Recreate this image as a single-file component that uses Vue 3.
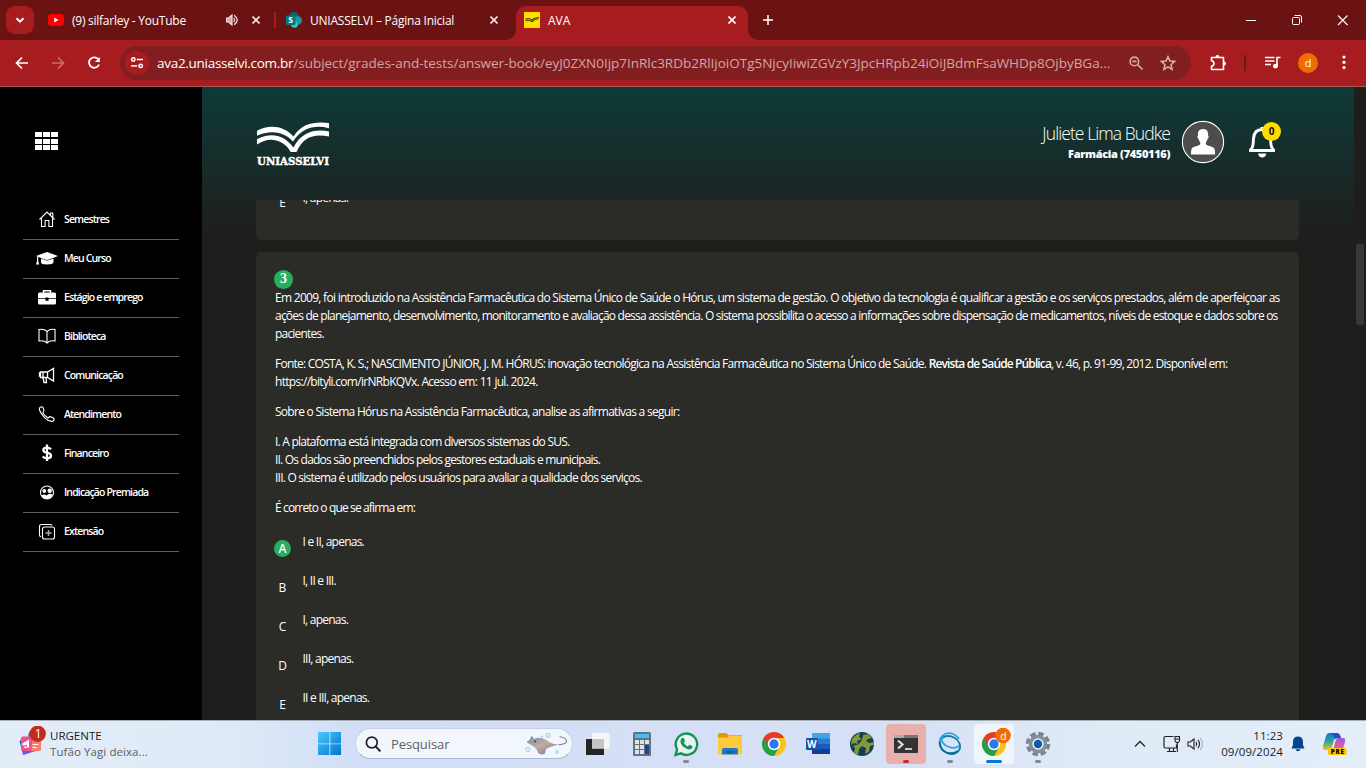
<template>
  <div class="screen">
    <!-- Browser tabs -->
    <header class="tabstrip">
      <button class="tab-search">
        <svg width="28" height="28" viewBox="0 0 28 28"><path d="M10.5 12.3l3.5 3.4 3.5-3.4" fill="none" stroke="#fff" stroke-width="2" /></svg>
      </button>
      <div class="tab tab-youtube">
        <svg class="favicon" width="16" height="16" viewBox="0 0 16 16">
          <rect y="2" width="16" height="12" rx="3" fill="#f00" />
          <path d="M6.2 5.5v5L10.6 8z" fill="#fff" />
        </svg>
        <span class="tab-title">(9) silfarley - YouTube</span>
        <svg class="sound" width="12" height="12" viewBox="0 0 12 12">
          <path d="M.5 4h2L6 1v10L2.5 8h-2z" fill="#d9a9aa" stroke="#f5dede" stroke-width="1.2" />
          <path d="M7.8 3.8q1.500 2.200 0 4.400M8.200 1.200q6 4.800 0 9.600" fill="none" stroke="#f5dede" stroke-width="1.3" />
        </svg>
        <svg class="close" width="8" height="8" viewBox="0 0 8 8"><path d="M.5.5l7 7M7.500.5l-7 7" stroke="#f6e4e4" stroke-width="1.6" /></svg>
      </div>
      <span class="tab-divider"></span>
      <div class="tab tab-portal">
        <svg class="favicon" width="16" height="16" viewBox="0 0 16 16">
          <circle cx="8" cy="4.8" r="4.8" fill="#036c70" />
          <circle cx="11.8" cy="8.5" r="4.2" fill="#1a9ba1" />
          <circle cx="8.500" cy="12.5" r="3.3" fill="#37c6d0" />
          <rect x="0" y="3.5" width="9.5" height="9.5" rx="1" fill="#03787c" />
          <text x="2.2" y="11.3" fill="#fff" font-size="8.5" font-weight="700" font-family="Open Sans, sans-serif">S</text>
        </svg>
        <span class="tab-title">UNIASSELVI – Página Inicial</span>
        <svg class="close" width="8" height="8" viewBox="0 0 8 8"><path d="M.5.5l7 7M7.500.5l-7 7" stroke="#f6e4e4" stroke-width="1.6" /></svg>
      </div>
      <div class="tab tab-active">
        <svg class="favicon" width="16" height="16" viewBox="0 0 16 16">
          <rect width="16" height="16" fill="#ffde00" />
          <path d="M1.5 7.200q4-1.500 6.500 1 2.500-2.800 7-2.700M1.500 8.800q4-1 6.700.9Q10.500 7.200 14.500 6.800" fill="none" stroke="#4c460d" stroke-width="1.1" />
        </svg>
        <span class="tab-title">AVA</span>
        <svg class="close" width="8" height="8" viewBox="0 0 8 8"><path d="M.5.5l7 7M7.500.5l-7 7" stroke="#fff" stroke-width="1.6" /></svg>
      </div>
      <svg class="new-tab" width="10" height="10" viewBox="0 0 10 10"><path d="M5 0v10M0 5h10" stroke="#fff" stroke-width="1.5" /></svg>
      <svg class="win-controls" width="104" height="12" viewBox="0 0 104 12">
        <path d="M0 6.500h10" stroke="#fff" />
        <rect x="46.5" y="3.5" width="7" height="7" rx="1" fill="none" stroke="#fff" />
        <path d="M48.5 1.500h5.500q1.500 0 1.500 1.500v5.500" fill="none" stroke="#fff" />
        <path d="M92 1.500l9.500 9.500M101.500 1.500L92 11" stroke="#fff" stroke-width="1.1" />
      </svg>
    </header>

    <!-- Address bar -->
    <div class="toolbar">
      <svg class="nav-icons" width="88" height="16" viewBox="0 0 88 16">
        <path d="M13 8H2M7 2.500L1.500 8 7 13.500" fill="none" stroke="#fff" stroke-width="1.7" />
        <path d="M37 8h11M43 2.500L48.500 8 43 13.500" fill="none" stroke="#d06b6c" stroke-width="1.7" />
        <path d="M83.500 4.500A5.200 5.200 0 1 0 84.100 9.500" fill="none" stroke="#fff" stroke-width="1.8" />
        <path d="M84.900 2v5h-5z" fill="#fff" />
      </svg>
      <div class="omnibox">
        <span class="site-info">
          <svg width="14" height="14" viewBox="0 0 14 14">
            <g fill="none" stroke="#fff" stroke-width="1.5">
              <circle cx="3.3" cy="3.5" r="1.7" /><path d="M6.800 3.500H13" />
              <circle cx="10.7" cy="9.9" r="1.7" /><path d="M1 9.900h6.200" />
            </g>
          </svg>
        </span>
        <span class="url"><b>ava2.uniasselvi.com.br</b>/subject/grades-and-tests/answer-book/eyJ0ZXN0Ijp7InRlc3RDb2RlIjoiOTg5NjcyIiwiZGVzY3JpcHRpb24iOiJBdmFsaWHDp8OjbyBGa...</span>
        <svg class="zoom-icon" width="14" height="14" viewBox="0 0 14 14">
          <circle cx="5.4" cy="5.4" r="4.3" fill="none" stroke="#d1a9aa" stroke-width="1.6" />
          <path d="M3.300 5.400h4.200M8.600 8.600l4.900 4.900" stroke="#d1a9aa" stroke-width="1.6" />
        </svg>
        <svg class="star-icon" width="16" height="16" viewBox="0 0 16 16"><path d="M8 1.700l1.900 4.400 4.700.4-3.600 3.200 1.100 4.700L8 11.900l-4.100 2.500L5 9.700 1.400 6.500l4.700-.4z" fill="none" stroke="#d9b4b5" stroke-width="1.5" /></svg>
      </div>
      <svg class="ext-icon" width="17" height="17" viewBox="0 0 17 17">
        <path d="M1.500 3.500h12v12h-12v-3.300q2.400-.3 2.400-2.700T1.500 6.800z" fill="none" stroke="#fff" stroke-width="1.6" stroke-linejoin="round" />
        <path d="M5.500 3a2 2 0 0 1 4 0zM14 7.500a2 2 0 0 1 0 4z" fill="#fff" />
      </svg>
      <span class="toolbar-divider"></span>
      <svg class="media-icon" width="16" height="13" viewBox="0 0 16 13">
        <path d="M0 1.500h9.500M0 5h9.500M0 8.500h6M12 10V1.500h3.500" fill="none" stroke="#fff" stroke-width="1.7" />
        <circle cx="10.4" cy="10.2" r="2.4" fill="#fff" />
      </svg>
      <span class="profile">d</span>
      <svg class="more" width="4" height="15" viewBox="0 0 4 15"><g fill="#fff"><circle cx="2" cy="2" r="1.6" /><circle cx="2" cy="7.3" r="1.6" /><circle cx="2" cy="12.6" r="1.6" /></g></svg>
    </div>

    <!-- Page -->
    <div class="page">
      <aside class="sidebar">
        <div class="apps"><i v-for="n in 9" :key="n"></i></div>
        <nav>
          <a v-for="item in menu" :key="item.label" class="menu-item">
            <svg width="24" height="18" viewBox="0 0 24 18" v-html="item.icon"></svg>
            <span>{{ item.label }}</span>
          </a>
        </nav>
      </aside>

      <main class="content">
        <div class="top">
          <svg class="logo" width="80" height="56" viewBox="0 0 80 56">
            <path d="M1 9.800C13 3 28 4.500 37.500 15.500 46 1.500 60 .5 73 2v5.200C60 4 47 5.500 37 20.500 27 9 12 9.500 1 14.800z" fill="#fff" />
            <path d="M1 18.300C14 11 28 13 37.500 26.500 46 10 60 8 73 10.500v5C58 12.500 47 16 40.500 31h-5.800C29 19.500 14 14 1 23.500z" fill="#fff" />
            <text x="1" y="43.8" textLength="72" lengthAdjust="spacingAndGlyphs">UNIASSELVI</text>
          </svg>
          <div class="user">
            <p class="user-name">Juliete Lima Budke</p>
            <p class="user-course">Farmácia (7450116)</p>
          </div>
          <svg class="avatar" width="44" height="44" viewBox="0 0 44 44">
            <circle cx="22" cy="22" r="20.6" fill="#4d4d4d" stroke="#fff" stroke-width="1.1" />
            <path d="M22 9c4 0 5.400 2.800 5.100 6.500 1 .6.500 3-.5 3.300-.3 1.800-1.200 2.800-1.700 3.300v2.200c1.800 2 7.300 2.200 8.400 4.200.7 1.300.8 3.500.8 6H10c0-2.500.1-4.700.8-6 1.100-2 6.600-2.200 8.400-4.200v-2.200c-.5-.5-1.400-1.500-1.700-3.300-1-.3-1.500-2.700-.5-3.300C16.600 11.800 18 9 22 9z" fill="#fff" />
          </svg>
          <div class="bell">
            <svg width="28" height="34" viewBox="0 0 28 34">
              <path d="M14 3v2.500M1 26.500h26M2.500 26C6 22.500 5 19.500 5.500 14.500 6 8.500 9 5.500 14 5.500s8 3 8.500 9c.5 5-.5 8 3 11.500" fill="none" stroke="#fff" stroke-width="2.9" />
              <path d="M10 29.500h8.400q-.8 4-4.200 4T10 29.500z" fill="#fff" />
            </svg>
            <span class="badge">0</span>
          </div>
        </div>

        <div class="questions">
          <section class="card card-prev">
            <div class="option option-prev">
              <span class="letter">E</span>
              <span class="answer">I, apenas.</span>
            </div>
          </section>

          <section class="card card-current">
            <span class="number">3</span>
            <div class="statement">
              <p>
                <span class="l1">Em 2009, foi introduzido na Assistência Farmacêutica do Sistema Único de Saúde o Hórus, um sistema de gestão. O objetivo da tecnologia é qualificar a gestão e os serviços prestados, além de aperfeiçoar as</span><br>
                <span class="l2">ações de planejamento, desenvolvimento, monitoramento e avaliação dessa assistência. O sistema possibilita o acesso a informações sobre dispensação de medicamentos, níveis de estoque e dados sobre os</span><br>
                <span class="l3">pacientes.</span>
              </p>
              <p>
                <span class="l4">Fonte: COSTA, K. S.; NASCIMENTO JÚNIOR, J. M. HÓRUS: inovação tecnológica na Assistência Farmacêutica no Sistema Único de Saúde. <strong>Revista de Saúde Pública</strong>, v. 46, p. 91-99, 2012. Disponível em:</span><br>
                <span class="l5">https://bityli.com/irNRbKQVx. Acesso em: 11 jul. 2024.</span>
              </p>
              <p class="l6">Sobre o Sistema Hórus na Assistência Farmacêutica, analise as afirmativas a seguir:</p>
              <p>
                <span class="l7">I. A plataforma está integrada com diversos sistemas do SUS.</span><br>
                <span class="l8">II. Os dados são preenchidos pelos gestores estaduais e municipais.</span><br>
                <span class="l9">III. O sistema é utilizado pelos usuários para avaliar a qualidade dos serviços.</span>
              </p>
              <p class="l10">É correto o que se afirma em:</p>
            </div>
            <div v-for="o in options" :key="o.letter" class="option">
              <span class="letter" :class="{ correct: o.letter === 'A' }">{{ o.letter }}</span>
              <span class="answer">{{ o.text }}</span>
            </div>
          </section>
        </div>
      </main>

      <div class="scroll"><i></i></div>
    </div>

    <!-- Windows taskbar -->
    <footer class="taskbar">
      <div class="news">
        <svg width="30" height="32" viewBox="0 0 30 32">
          <circle cx="17" cy="10" r="7" fill="#1689d8" />
          <path d="M2 14l14-5 5 15-16 5z" fill="#7b4be8" />
          <path d="M1.500 15h3v12z" fill="#1565c0" />
          <rect x="3" y="10.5" width="20" height="14.5" rx="2" fill="#f0528e" />
          <path d="M15 10.500h6q2 0 2 2V23q0 2-2 2h-8z" fill="#fb7d6b" />
          <path d="M4.500 17.500l6.500-4v8.500l-6.500-3zM6.500 19v3h2.500v-3z" fill="#fff" />
          <path d="M14.500 18.500h6M14.500 21.500h4" stroke="#fff" stroke-width="1.2" />
          <circle cx="19.7" cy="7.8" r="8.2" fill="#c42b1c" />
          <text x="16.8" y="12" fill="#fff" font-size="12" font-family="Open Sans, sans-serif">1</text>
        </svg>
        <div>
          <p class="news-title">URGENTE</p>
          <p class="news-text">Tufão Yagi deixa...</p>
        </div>
      </div>

      <svg class="start" width="24" height="24" viewBox="0 0 24 24">
        <defs><linearGradient id="win" x1="0" y1="0" x2="1" y2="1"><stop offset="0" stop-color="#46cbfb" /><stop offset="1" stop-color="#0372d1" /></linearGradient></defs>
        <path d="M0 0h11.400v11.400H0zM12.300 0H23v11.400H12.300zM0 12.300h11.400V23H0zM12.300 12.300H23V23H12.300z" fill="url(#win)" />
      </svg>

      <div class="search">
        <svg width="16" height="16" viewBox="0 0 16 16"><circle cx="6.8" cy="6.5" r="5.4" fill="none" stroke="#202124" stroke-width="1.7" /><path d="M10.800 10.600l4 4.200" stroke="#202124" stroke-width="2" stroke-linecap="round" /></svg>
        <span>Pesquisar</span>
        <svg class="ray" width="44" height="24" viewBox="0 0 44 24">
          <defs><linearGradient id="ray" x1="0" y1="0" x2="1" y2="1"><stop offset="0" stop-color="#7288a5" /><stop offset=".45" stop-color="#c3ad9f" /><stop offset="1" stop-color="#6569a8" /></linearGradient></defs>
          <path d="M2 9.500Q6 8 6 4q1.500 0 3 3 7-3 13 1.500c4 3 8 4.500 14 4-6 .5-10 2-15 4.500l-1 4.500q-4 2-7-.5-1-5-6-7.500L2 10.500z" fill="url(#ray)" />
          <path d="M34 12.700q7-.5 7.500-3 .5-4-7-5" fill="none" stroke="#7c7890" stroke-width="1.1" />
          <circle cx="10" cy="9.5" r="1" fill="#303850" />
          <g stroke="#9fd9ed" fill="#d9ecfa"><circle cx="23" cy="3.5" r="2.2" /><circle cx="2.8" cy="17.5" r="2.3" /><circle cx="32" cy="20" r="1.5" /><circle cx="17" cy="4.5" r=".8" /></g>
        </svg>
      </div>

      <div class="apps-bar">
        <span v-for="app in taskApps" :key="app.name" class="app" :class="[app.state, { running: app.running }]">
          <svg width="32" height="32" viewBox="0 0 32 32" v-html="app.icon"></svg>
        </span>
      </div>

      <div class="tray">
        <svg class="chevron" width="12" height="8" viewBox="0 0 12 8"><path d="M1 6.500l5-5 5 5" fill="none" stroke="#222" stroke-width="1.3" /></svg>
        <svg class="network" width="18" height="18" viewBox="0 0 18 18">
          <path d="M10.500 1.500h-8q-1.500 0-1.500 1.500v8.500q0 1.500 1.500 1.500h11V9.500M4 16.500h9M6.500 13v3M10.500 13v3" fill="none" stroke="#222" stroke-width="1.2" />
          <path d="M12 1.500h4.500v4.300l-1.200 1.700h-2L12 5.800zM12 4h4.500M14.300 7.500V17" fill="none" stroke="#222" stroke-width="1.1" />
        </svg>
        <svg class="volume" width="17" height="14" viewBox="0 0 17 14">
          <path d="M1 5h2.300L7 2v10L3.300 9H1z" fill="none" stroke="#222" stroke-width="1.1" />
          <path d="M9 4.700q1.500 2.300 0 4.600M11 2.800q3 4.200 0 8.400" fill="none" stroke="#222" stroke-width="1.1" />
          <path d="M13.200 1q4.200 6 0 12" fill="none" stroke="#a9b1bd" stroke-width="1.1" />
        </svg>
        <div class="clock"><p>11:23</p><p>09/09/2024</p></div>
        <svg class="notify" width="14" height="16" viewBox="0 0 14 16"><path d="M7 .5q5 0 5 5.500v3l1.500 3.500H.5L2 9V6Q2 .5 7 .5zM4.500 13.300h5Q9 15.300 7 15.300t-2.500-2z" fill="#00458f" /></svg>
        <svg class="copilot" width="25" height="24" viewBox="0 0 25 24">
          <defs>
            <linearGradient id="cp1" x1="0" y1="0" x2="0" y2="1"><stop offset="0" stop-color="#1875d8" /><stop offset=".5" stop-color="#28a99a" /><stop offset="1" stop-color="#f4c51e" /></linearGradient>
            <linearGradient id="cp2" x1="0" y1="0" x2="0" y2="1"><stop offset="0" stop-color="#a058e8" /><stop offset="1" stop-color="#f4607c" /></linearGradient>
          </defs>
          <path d="M7 1h9q-3 2-4 7l-2 7q-1 3-4 3H3q-3 0-2-4L4 4q1-3 3-3z" fill="url(#cp1)" />
          <path d="M9 1h6q3 0 4 5h-3q-3 0-3 2L12 5z" fill="#1b50c8" />
          <path d="M16 6h5q3 0 2 4l-2.500 8H11l2-7q1-5 3-5z" fill="url(#cp2)" />
          <rect x="6" y="16" width="18.5" height="7" rx="1.5" fill="#ffc400" />
          <text x="8.8" y="21.8" font-size="6.2" font-weight="800" font-family="Open Sans, sans-serif" textLength="13">PRE</text>
        </svg>
      </div>
    </footer>
  </div>
</template>

<script setup>
const menu = [
  { label: 'Semestres', icon: '<path d="M4.500 9.500L12 2l7.500 7.500M6.500 8.500V16.500h3.600v-6h3.800v6h3.600V8.500M15.500 5V3h2.300v4.500" fill="none" stroke="#fff" stroke-width="1.1"/>' },
  { label: 'Meu Curso', icon: '<path d="M1 7L12 3l11 4-11 4.200z" fill="#fff"/><path d="M6 9.500l6 2.300 6.500-2.300v3.500q0 2.500-6.500 2.500T6 13zM2 7.500h1.200V12l1 3.500H1L2 12z" fill="#fff"/>' },
  { label: 'Estágio e emprego', icon: '<path d="M8.500 5V2.800h7V5" fill="none" stroke="#fff" stroke-width="1.5"/><path d="M3 6q0-1.500 1.500-1.500h15Q21 4.500 21 6v4.300H3zM3 11h7.500v1.700h3V11H21v4q0 1.500-1.500 1.500h-15Q3 16.500 3 15z" fill="#fff"/><path d="M10.500 9.500h3v2h-3z" fill="#000"/>' },
  { label: 'Biblioteca', icon: '<path d="M12 4.500Q9 1.500 4 2.500v11.500q5-1 8 2 3-3 8-2V2.500q-5-1-8 2zM12 4.500V16" fill="none" stroke="#fff" stroke-width="1.1"/>' },
  { label: 'Comunicação', icon: '<path d="M5.500 6h7L18.500 2.500v12.500L12.500 11.500h-7zM12.500 6v5.500M8 11.500l1 5h2.500l-.5-5M5.500 7H4.500v3h1M8 6.500v4.500" fill="none" stroke="#fff" stroke-width="1.3"/>' },
  { label: 'Atendimento', icon: '<path d="M5 2.500Q6.500 1 8 2.500l1 3L7.800 7.800q2.200 3.500 5.200 5.200l2-1.500 3.800 1.800q1 1.500-1 3-4 .5-8-3.500T4.500 5q-.5-1.500.5-2.500z" fill="none" stroke="#fff" stroke-width="1.1"/>' },
  { label: 'Financeiro', icon: '<path d="M16 5.200Q14.500 3.600 12 3.600q-3.700 0-3.700 2.400 0 2 3.700 2.700 4 .8 4 3 0 2.600-4 2.600-2.800 0-4.300-1.700M12 .5v16.500" fill="none" stroke="#fff" stroke-width="2.3"/>' },
  { label: 'Indicação Premiada', icon: '<circle cx="12" cy="9.5" r="6.5" fill="none" stroke="#fff" stroke-width="1.1"/><circle cx="9.3" cy="8" r="1.9" fill="#fff"/><circle cx="14.7" cy="7.7" r="2.2" fill="#fff"/><path d="M6.500 12.500q2.500-2 5 0 2.500-3 6-1-1.500 4.500-5.500 4.500T6.500 12.500z" fill="#fff"/>' },
  { label: 'Extensão', icon: '<rect x="7.5" y="5" width="12" height="12" rx="2" fill="none" stroke="#fff" stroke-width="1.1"/><path d="M6 15q-1.500-.5-1.500-2V4.500q0-2 2-2H15q1.500 0 2 1" fill="none" stroke="#fff" stroke-width="1.1"/><path d="M13.500 8v6M10.500 11h6" stroke="#aaa" stroke-width="1.5"/>' },
]

const options = [
  { letter: 'A', text: 'I e II, apenas.' },
  { letter: 'B', text: 'I, II e III.' },
  { letter: 'C', text: 'I, apenas.' },
  { letter: 'D', text: 'III, apenas.' },
  { letter: 'E', text: 'II e III, apenas.' },
]

const chrome = `
  <circle cx="16" cy="16" r="12" fill="#fbc116"/>
  <path d="M5.600 10A12 12 0 0 1 26.400 10H16z" fill="#e33b2e"/>
  <path d="M5.600 10A12 12 0 0 0 16 28l5.200-9L16 16z" fill="#22a04b"/>
  <path d="M5.600 10L10.800 19 16 10z" fill="#e33b2e"/>
  <circle cx="16" cy="16" r="6.2" fill="#fff"/><circle cx="16" cy="16" r="4.7" fill="#2979ea"/>`

const taskApps = [
  { name: 'taskview', icon: '<path d="M4 11h18v16H4z" fill="#252525"/><path d="M10 5h17.500v15.500H10z" fill="#f6f6f6"/><path d="M10 11h12v9.500H10z" fill="#c5c5c5"/>' },
  { name: 'calculator', icon: '<rect x="7" y="4" width="18" height="24" rx="1.5" fill="#66717d"/><path d="M9 6h14v4H9z" fill="#3cc5f2"/><path d="M9 12h4v4H9zM14 12h4v4h-4zM19 12h4v4h-4zM9 17h4v4H9zM14 17h4v4h-4zM9 22h4v4H9zM14 22h4v4h-4z" fill="#dce3e8"/><path d="M19 17h4v9h-4z" fill="#104a92"/>' },
  { name: 'whatsapp', running: true, icon: '<path d="M5.500 27l1.600-5.600A10.700 10.700 0 1 1 11 25.400z" fill="#e8f4f0" stroke="#15935a" stroke-width="2.4"/><path d="M11.500 10.500q1.500-1.500 2.500 0l1 2.500-1.200 1.700q1.200 2.600 4 3.700l1.600-1.700 2.800 1.300q.8 1-.5 2.500-2 1.700-5 .3-5-2-6.200-6.500-.3-2.300 1-3.800z" fill="#15935a"/>' },
  { name: 'explorer', icon: '<path d="M4 7q0-2 2-2h6l2.500 2H28v5H4z" fill="#dc9a05"/><path d="M4 9.500h9l2-2h12q1 0 1 1V25q0 1.500-1.500 1.500H4z" fill="#ffcb3d"/><path d="M8 26.500V22q0-2 2-2h12q2 0 2 2v4.500z" fill="#1979c8"/><path d="M12 24h8" stroke="#0c4f8f" stroke-width="1.3"/>' },
  { name: 'chrome', icon: chrome },
  { name: 'word', icon: '<path d="M10 5h18v6H10z" fill="#41a5ee"/><path d="M10 10.500h18V16H10z" fill="#2b7cd3"/><path d="M10 16h18v5.500H10z" fill="#185abd"/><path d="M10 21h18v5H10z" fill="#103f91"/><rect x="4" y="10" width="12" height="12" rx="1" fill="#1851ad"/><text x="5" y="19.5" font-size="10" font-weight="700" font-family="Open Sans, sans-serif" fill="#fff">W</text>' },
  { name: 'maps', icon: '<circle cx="16" cy="16" r="12" fill="#123c58"/><path d="M6 11q4-5 8-6l-1 4 3 2-5 2 1 3-4-1-3 2zM17 7l5-1 4 4-4 1-2 2 3 2 5-1v3l-4 1-1 6-4 2 1-6-4-2-3 3-1 6-4-2 1-5-2-2 6-2 3-4z" fill="#84983a"/>' },
  { name: 'terminal', state: 'alert', running: true, icon: '<rect x="4" y="7" width="24" height="18" rx="1" fill="#333"/><path d="M4 7h24v3H4z" fill="#777"/><path d="M4 7h10v3H4z" fill="#aaa"/><path d="M8 12.500l4.500 4L8 20.500" fill="none" stroke="#ddd" stroke-width="2.2"/><path d="M15 21h7" stroke="#fff" stroke-width="1.5"/>' },
  { name: 'sync', running: true, icon: '<g fill="none" stroke-width="1.8"><ellipse cx="16" cy="17" rx="10.5" ry="8.5" transform="rotate(28 16 17)" stroke="#157aa5"/><path d="M6 18Q4 10 11 6q8-3 14 5M8 8q-2 8 7 11 6 2 10-1" stroke="#23a9dd"/><path d="M5.500 14Q6 23 14 25q6 1 10-2" stroke="#126b98"/></g>' },
  { name: 'chrome-profile', state: 'active', running: true, icon: chrome + '<circle cx="25" cy="7.5" r="7.8" fill="#ef6c00"/><text x="22.2" y="11.5" fill="#fff" font-size="10.5" font-family="Open Sans, sans-serif">d</text>' },
  { name: 'settings', running: true, icon: '<circle cx="16" cy="16" r="10" fill="none" stroke="#7b8590" stroke-width="4.5" stroke-dasharray="5.2 2.654"/><circle cx="16" cy="16" r="9.2" fill="#858e98"/><circle cx="16" cy="16" r="5.7" fill="#eef2f6"/><circle cx="16" cy="16" r="4.2" fill="#0d5bab"/>' },
]
</script>

<style>
html, body { overflow: hidden; }
</style>

<style scoped>
.screen {
  width: 1366px;
  height: 768px;
  display: flex;
  flex-direction: column;
  overflow: hidden;
  font-family: "Open Sans", "Noto Sans", sans-serif;
  background: #000;
}

.screen * { box-sizing: border-box; }
p { margin: 0; }
svg { display: block; flex: none; }

/* Tabs */
.tabstrip {
  height: 40px;
  flex: none;
  display: flex;
  align-items: center;
  background: #6b1213;
  color: #fff;
  font-size: 12px;
}

.tab-search {
  width: 28px;
  height: 28px;
  padding: 0;
  margin: 0 14px 0 6px;
  border: none;
  border-radius: 9px;
  background: #a71d1f;
}

.tab { display: flex; align-items: center; white-space: nowrap; }
.favicon { margin-right: 8px; }
.tab-title { flex: 1; }
.tab-youtube { width: 212px; }
.tab-youtube .tab-title { letter-spacing: -0.25px; }
.sound { margin-right: 14px; }
.tab-divider { width: 2px; height: 16px; margin: 0 10px 0 14px; background: #a71d1f; }
.tab-portal { width: 212px; }
.tab-portal .tab-title { letter-spacing: -0.23px; }

.tab-active {
  position: relative;
  width: 232px;
  height: 34px;
  align-self: flex-end;
  margin-left: 18px;
  padding: 0 12px 6px 8px;
  border-radius: 10px 10px 0 0;
  background: #a71d1f;
}

.tab-active::before,
.tab-active::after {
  content: "";
  position: absolute;
  bottom: 0;
  width: 10px;
  height: 10px;
}

.tab-active::before { left: -10px; background: radial-gradient(circle at 0 0, #6b1213 9.5px, #a71d1f 10px); }
.tab-active::after { right: -10px; background: radial-gradient(circle at 100% 0, #6b1213 9.5px, #a71d1f 10px); }
.new-tab { margin-left: 15px; }
.win-controls { margin-left: auto; margin-right: 16px; }

/* Toolbar */
.toolbar {
  height: 47px;
  flex: none;
  display: flex;
  align-items: center;
  padding: 0 20px 1px 15px;
  border-bottom: 1px solid #a9595a;
  background: #a71d1f;
}

.nav-icons { margin-right: 17px; }

.omnibox {
  width: 1072px;
  height: 34px;
  display: flex;
  align-items: center;
  padding-left: 5px;
  border-radius: 17px;
  background: #821e20;
}

.site-info {
  width: 24px;
  height: 24px;
  display: flex;
  align-items: center;
  justify-content: center;
  margin-right: 8px;
  border-radius: 50%;
  background: #a71d1f;
}

.url {
  width: 960px;
  font-size: 13.5px;
  letter-spacing: -0.015px;
  white-space: nowrap;
  color: #d3a5a6;
}

.url b { font-weight: 400; color: #fff; letter-spacing: -0.28px; }
.zoom-icon { margin-left: 12px; }
.star-icon { margin-left: 17px; }
.ext-icon { margin-left: 19px; }
.toolbar-divider { width: 2px; height: 16px; margin: 0 19px 0 17px; background: #741516; }

.profile {
  width: 20px;
  height: 20px;
  margin: 0 24px 0 17px;
  border-radius: 50%;
  background: #ef6c00;
  color: #fff;
  font-size: 11px;
  line-height: 19px;
  text-align: center;
}

/* Page */
.page { height: 633px; flex: none; display: flex; background: #1e1e1c; }

.sidebar { width: 202px; padding: 45px 23px 0; background: #000; }

.apps {
  display: grid;
  grid-template-columns: repeat(3, 7px);
  grid-auto-rows: 5px;
  gap: 1.5px 1px;
  margin-left: 12px;
  height: 69px;
}

.apps i { background: #fff; }

.menu-item {
  height: 39px;
  display: flex;
  align-items: center;
  padding: 0 0 3px 11px;
  border-bottom: 1px solid #606060;
  color: #fff;
  font-size: 10.5px;
  font-weight: 600;
  letter-spacing: -0.86px;
  white-space: nowrap;
}

.menu-item svg { margin: 1px 5px 0 1px; }

.content {
  width: 1152px;
  overflow: hidden;
  background: linear-gradient(#0e3a38, #1e1e1c 150px);
}

.top { height: 113px; display: flex; align-items: flex-start; padding-left: 54px; }
.logo { margin-top: 34px; }
.logo text { font-family: "DejaVu Serif", serif; font-weight: 700; font-size: 11.5px; fill: #fff; stroke: #fff; stroke-width: 0.5px; }

.user { margin: 34px 11px 0 auto; text-align: right; color: #fff; white-space: nowrap; }
.user-name { font-size: 17.5px; font-weight: 300; line-height: 24px; letter-spacing: -0.92px; }
.user-course { font-size: 11px; font-weight: 800; line-height: 18px; letter-spacing: -0.34px; }
.avatar { margin-top: 32.5px; }

.bell { position: relative; margin: 37px 78px 0 23px; }

.badge {
  position: absolute;
  top: -2.5px;
  right: -5px;
  width: 19px;
  height: 19px;
  border-radius: 50%;
  background: #ffdc00;
  color: #111;
  font-size: 10px;
  font-weight: 700;
  line-height: 19px;
  text-align: center;
}

.questions { height: 520px; padding-left: 54px; overflow: hidden; }

.card { width: 1043px; background: #2b2b27; color: #fff; }
.card-prev { height: 40px; padding: 1px 18px; margin-bottom: 12px; border-radius: 0 0 5px 5px; overflow: hidden; }
.card-current { height: 520px; padding: 18px 18px 0; border-radius: 5px; }

.number {
  display: block;
  width: 19px;
  height: 19px;
  border-radius: 50%;
  background: #27ae60;
  color: #fff;
  font-family: "Liberation Serif", serif;
  font-size: 14px;
  font-weight: 700;
  line-height: 18px;
  text-align: center;
}

.statement { font-size: 12px; line-height: 18px; white-space: nowrap; }
.statement p { padding-left: 1px; margin-bottom: 12px; }
.statement strong { font-weight: 600; letter-spacing: -0.87px; }

/* Tracking of each line of the statement */
.l1 { letter-spacing: -0.718px; }
.l2 { letter-spacing: -0.787px; }
.l3 { letter-spacing: -0.8px; }
.l4 { letter-spacing: -0.75px; }
.l5 { letter-spacing: -0.7px; }
.l6 { letter-spacing: -0.72px; }
.l7 { letter-spacing: -0.765px; }
.l8 { letter-spacing: -0.79px; }
.l9 { letter-spacing: -0.775px; }
.l10 { letter-spacing: -0.86px; }

.option {
  height: 39px;
  display: flex;
  align-items: flex-start;
  font-size: 12px;
  letter-spacing: -0.76px;
}

.option-prev { margin-top: -18px; }
.option-prev .answer { margin-top: 6px; }

.letter {
  width: 17px;
  height: 17px;
  margin: 11px 11.5px 0 0;
  border-radius: 50%;
  font-size: 12px;
  line-height: 17px;
  text-align: center;
  letter-spacing: 0;
}

.correct { background: #27ae60; font-weight: 600; }
.answer { margin-top: 4px; line-height: 18px; }

.scroll { width: 12px; padding: 157px 2px 0; background: #1e1e1c; }
.scroll i { display: block; width: 8px; height: 81px; border-radius: 3px; background: #383838; }

/* Taskbar */
.taskbar {
  height: 48px;
  flex: none;
  display: flex;
  align-items: center;
  padding-bottom: 2px;
  border-top: 1px solid #a8adb5;
  background: linear-gradient(90deg, #e2edf8 0, #deeaf7 230px, #d3dff7 340px, #d6e0f5 900px, #dfeaf7 1080px, #e3eefa 100%);
  color: #1b1b1b;
}

.news { width: 318px; display: flex; align-items: center; padding-left: 18px; font-size: 11.5px; line-height: 16px; }
.news svg { margin: -4px 2px 0 0; }
.news-title { letter-spacing: 0; }
.news-text { color: #5b6067; letter-spacing: 0.08px; }
.start { margin-top: 1px; }

.search {
  width: 218px;
  height: 31px;
  display: flex;
  align-items: center;
  margin-left: 13px;
  padding-left: 9px;
  border: 1px solid #c3cfe2;
  border-bottom-color: #a9b8d3;
  border-radius: 16px;
  background: #f2f6fd;
  color: #5d6066;
  font-size: 13px;
}

.search span { margin-left: 10px; letter-spacing: -0.1px; }
.ray { margin-left: auto; margin-right: 3px; }

.apps-bar { display: flex; gap: 4px; margin-left: 5px; }

.app {
  position: relative;
  width: 40px;
  height: 40px;
  display: flex;
  align-items: center;
  justify-content: center;
  border-radius: 4px;
}

.app svg { overflow: visible; }
.alert { background: #e9afac; }
.active { background: #f0f4fb; }

.running::after {
  content: "";
  position: absolute;
  bottom: 1px;
  left: 17px;
  width: 6px;
  height: 3px;
  border-radius: 2px;
  background: #828891;
}

.alert::after { background: #c42b1c; }
.active::after { left: 12px; width: 16px; background: #0078d4; }

.tray { display: flex; align-items: center; margin-left: auto; padding-right: 19px; }
.network { margin-left: 17px; }
.volume { margin-left: 6px; }
.clock { width: 79px; text-align: right; font-size: 11.5px; line-height: 16px; letter-spacing: 0.08px; }
.notify { margin-left: 8px; }
.copilot { margin-left: 17px; }
</style>
